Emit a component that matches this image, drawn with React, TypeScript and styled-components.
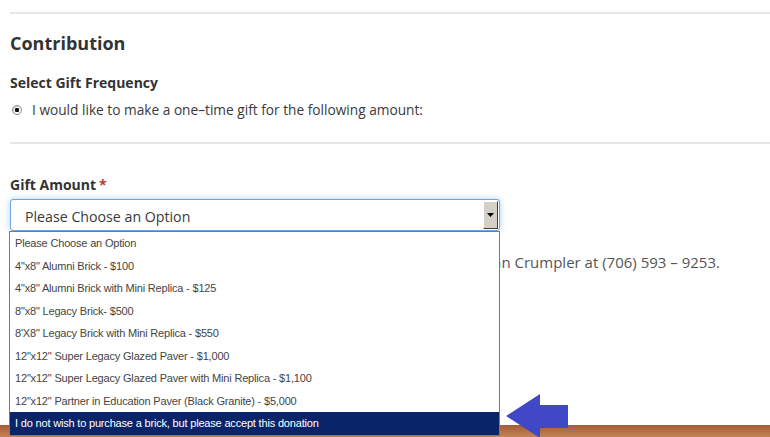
import React from "react";
import styled, { createGlobalStyle } from "styled-components";

const Global = createGlobalStyle`
  html, body { margin: 0; padding: 0; background: #fff; }
  body { font-family: "Open Sans", "DejaVu Sans", sans-serif; color: #3a3a3a; }
  * { box-sizing: border-box; }
`;

const Page = styled.div`
  position: relative;
  width: 770px;
  height: 437px;
  overflow: hidden;
  display: flex;
  flex-direction: column;
`;

const Content = styled.div`
  padding-left: 10px;
  display: flex;
  flex-direction: column;
`;

const Divider = styled.div<{ $top: number }>`
  height: 2px;
  background: #e6e6e6;
  margin-top: ${(p) => p.$top}px;
`;

const Heading = styled.h2`
  margin: 17px 0 0;
  font-size: 18px;
  line-height: 24px;
  font-weight: 700;
  color: #333;
`;

const SubHeading = styled.div`
  margin-top: 18px;
  font-size: 14px;
  line-height: 20px;
  font-weight: 700;
  color: #333;
`;

const RadioRow = styled.label`
  margin-top: 8px;
  display: flex;
  align-items: center;
  gap: 10px;
  font-size: 13.7px;
  line-height: 18px;
  color: #3a3a3a;
`;

const Radio = styled.span`
  width: 10px;
  height: 10px;
  margin-left: 2px;
  border-radius: 50%;
  border: 1px solid #8a8a8a;
  background: radial-gradient(circle, #111 0 2px, #fff 2.5px);
  box-shadow: inset 1px 1px 1px #ccc;
  flex: none;
`;

const Label = styled.div`
  margin-top: 31px;
  font-size: 14px;
  line-height: 20px;
  font-weight: 700;
  color: #333;
`;

const Required = styled.span`
  color: #c0392b;
  margin-left: 3px;
`;

const SelectBox = styled.div`
  margin-top: 4px;
  width: 490px;
  height: 32px;
  border: 1px solid #6fa6dc;
  border-radius: 3px;
  box-shadow: 0 0 6px rgba(82, 168, 236, 0.5);
  display: flex;
  align-items: stretch;
  background: #fff;
`;

const SelectText = styled.div`
  flex: 1;
  padding-left: 14px;
  padding-top: 2px;
  display: flex;
  align-items: center;
  font-size: 14.2px;
  color: #3a3a3a;
`;

const SelectButton = styled.div`
  width: 15px;
  margin: 1px 1px 1px 0;
  background: #d4d0c8;
  border-left: 1px solid #fff;
  border-top: 1px solid #fff;
  border-right: 1px solid #404040;
  border-bottom: 1px solid #404040;
  display: flex;
  align-items: center;
  justify-content: center;
`;

const Note = styled.p`
  margin: 20px 0 0;
  font-size: 15px;
  line-height: 22px;
  color: #555;
  white-space: nowrap;
`;

const Strip = styled.div`
  margin-top: auto;
  height: 12px;
  background: linear-gradient(#a45c34, #c48454);
`;

const List = styled.ul`
  position: absolute;
  left: 9px;
  top: 231px;
  width: 491px;
  height: 205px;
  margin: 0;
  padding: 0;
  list-style: none;
  background: #fff;
  border: 1px solid #7a7a7a;
  font-family: "Liberation Sans", Arial, sans-serif;
  font-size: 11px;
  letter-spacing: -0.18px;
`;

const Option = styled.li<{ $selected?: boolean }>`
  height: 22.5px;
  padding-left: 5px;
  display: flex;
  align-items: center;
  color: ${(p) => (p.$selected ? "#fff" : "#444")};
  background: ${(p) => (p.$selected ? "#0a246a" : "transparent")};
`;

const Arrow = styled.svg`
  position: absolute;
  left: 506px;
  top: 394px;
`;

const options = [
  "Please Choose an Option",
  "4\"x8\" Alumni Brick - $100",
  "4\"x8\" Alumni Brick with Mini Replica - $125",
  "8\"x8\" Legacy Brick- $500",
  "8'X8\" Legacy Brick with Mini Replica - $550",
  "12\"x12\" Super Legacy Glazed Paver - $1,000",
  "12\"x12\" Super Legacy Glazed Paver with Mini Replica - $1,100",
  "12\"x12\" Partner in Education Paver (Black Granite) - $5,000",
  "I do not wish to purchase a brick, but please accept this donation",
];

export default function App() {
  return (
    <>
      <Global />
      <Page>
        <Content>
          <Divider $top={12} />
          <Heading>Contribution</Heading>
          <SubHeading>Select Gift Frequency</SubHeading>
          <RadioRow>
            <Radio />
            I would like to make a one–time gift for the following amount:
          </RadioRow>
          <Divider $top={23} />
          <Label>
            Gift Amount<Required>*</Required>
          </Label>
          <SelectBox>
            <SelectText>Please Choose an Option</SelectText>
            <SelectButton>
              <svg width="7" height="4" viewBox="0 0 7 4">
                <path d="M0 0h7L3.5 4z" fill="#000" />
              </svg>
            </SelectButton>
          </SelectBox>
          <Note>
            For questions about the brick program or placement, please contact Jan Crumpler at (706) 593 – 9253.
          </Note>
        </Content>
        <Strip />
        <List>
          {options.map((o, i) => (
            <Option key={i} $selected={i === options.length - 1}>
              {o}
            </Option>
          ))}
        </List>
        <Arrow width="64" height="44" viewBox="0 0 64 44">
          <path d="M0 22 L34 0 L34 11 L62 11 L62 34 L34 34 L34 44 Z" fill="#4048c8" />
        </Arrow>
      </Page>
    </>
  );
}
